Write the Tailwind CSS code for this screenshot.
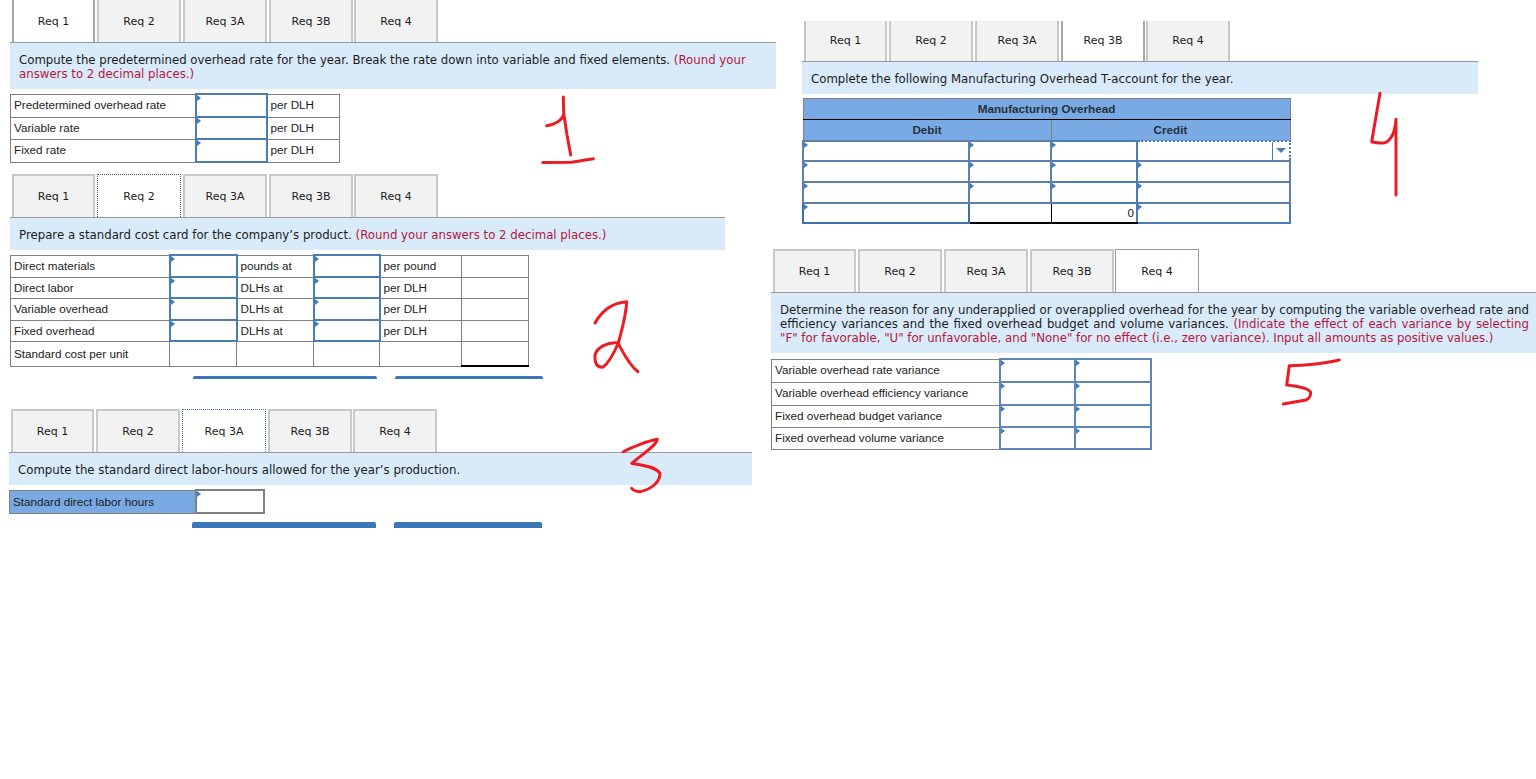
<!DOCTYPE html>
<html lang="en">
<head>
    <meta charset="UTF-8">
    <title>Req worksheets</title>
    <script src="https://cdn.jsdelivr.net/npm/@tailwindcss/browser@4"></script>
</head>
<body class="bg-white">
<div class="relative w-[1536px] h-[779px] overflow-hidden font-['DejaVu_Sans',sans-serif] text-[#1c1c1c]">

    <!-- Req 1 -->
    <section class="absolute left-[10px] top-0 w-[766px]">
        <div class="flex gap-[2px] pl-[2px] h-[42px] text-[11px]">
            <div class="w-[83px] flex items-center justify-center bg-white border-x-2 border-[#a8a8a8] pt-[2px]">Req 1</div>
            <div class="w-[84px] flex items-center justify-center bg-[#f2f2f2] border-x-2 border-[#c8c8c8] pt-[2px]">Req 2</div>
            <div class="w-[84px] flex items-center justify-center bg-[#f2f2f2] border-x-2 border-[#c8c8c8] pt-[2px]">Req 3A</div>
            <div class="w-[84px] flex items-center justify-center bg-[#f2f2f2] border-x-2 border-[#c8c8c8] pt-[2px]">Req 3B</div>
            <div class="w-[84px] flex items-center justify-center bg-[#f2f2f2] border-x-2 border-[#c8c8c8] pt-[2px] -ml-[1px]">Req 4</div>
        </div>
        <div class="border-t border-[#999] bg-[#d9ebfa] h-[47px] px-[9px] pt-[10px] text-[11.75px] leading-[14px]">
            Compute the predetermined overhead rate for the year. Break the rate down into variable and fixed elements. <span class="text-[#b5173a]">(Round your answers to 2 decimal places.)</span>
        </div>
        <table class="mt-[4px] w-[330px] table-fixed border-collapse font-['Liberation_Sans',sans-serif] text-[11.7px]">
            <colgroup><col class="w-[185px]"><col class="w-[71px]"><col class="w-[73px]"></colgroup>
            <tr class="h-[23px]">
                <td class="border border-[#808080] pl-[3px] pb-[1px]">Predetermined overhead rate</td>
                <td class="relative border-2 border-[#4a7db8]"><i class="absolute top-0 left-0 border-y-[3px] border-l-[4px] border-y-transparent border-l-[#3f7cc4]"></i></td>
                <td class="border border-[#808080] pl-[3px] pb-[1px]">per DLH</td>
            </tr>
            <tr class="h-[22px]">
                <td class="border border-[#808080] pl-[3px]">Variable rate</td>
                <td class="relative border-2 border-[#4a7db8]"><i class="absolute top-0 left-0 border-y-[3px] border-l-[4px] border-y-transparent border-l-[#3f7cc4]"></i></td>
                <td class="border border-[#808080] pl-[3px]">per DLH</td>
            </tr>
            <tr class="h-[23px]">
                <td class="border border-[#808080] pl-[3px] pb-[1px]">Fixed rate</td>
                <td class="relative border-2 border-[#4a7db8]"><i class="absolute top-0 left-0 border-y-[3px] border-l-[4px] border-y-transparent border-l-[#3f7cc4]"></i></td>
                <td class="border border-[#808080] pl-[3px] pb-[1px]">per DLH</td>
            </tr>
        </table>
    </section>

    <!-- Req 2 -->
    <section class="absolute left-[10px] top-[174px] w-[715px]">
        <div class="flex gap-[2px] pl-[2px] h-[43px] text-[11px]">
            <div class="w-[83px] flex items-center justify-center bg-[#f2f2f2] border-2 border-b-0 border-[#c8c8c8] pt-[2px]">Req 1</div>
            <div class="w-[84px] flex items-center justify-center bg-white border border-b-0 border-dotted border-[#4a5a70] pt-[2px]">Req 2</div>
            <div class="w-[84px] flex items-center justify-center bg-[#f2f2f2] border-2 border-b-0 border-[#c8c8c8] pt-[2px]">Req 3A</div>
            <div class="w-[84px] flex items-center justify-center bg-[#f2f2f2] border-2 border-b-0 border-[#c8c8c8] pt-[2px]">Req 3B</div>
            <div class="w-[84px] flex items-center justify-center bg-[#f2f2f2] border-2 border-b-0 border-[#c8c8c8] pt-[2px] -ml-[1px]">Req 4</div>
        </div>
        <div class="border-t border-[#999] bg-[#d9ebfa] h-[33px] px-[9px] pt-[10px] text-[11.75px] leading-[14px]">
            Prepare a standard cost card for the company’s product. <span class="text-[#b5173a]">(Round your answers to 2 decimal places.)</span>
        </div>
        <table class="mt-[4px] w-[518px] table-fixed border-collapse font-['Liberation_Sans',sans-serif] text-[11.7px]">
            <colgroup><col class="w-[159px]"><col class="w-[67px]"><col class="w-[77px]"><col class="w-[66px]"><col class="w-[82px]"><col class="w-[67px]"></colgroup>
            <tr class="h-[22px]">
                <td class="border border-[#808080] pl-[3px]">Direct materials</td>
                <td class="relative border-2 border-[#4a7db8]"><i class="absolute top-0 left-0 border-y-[3px] border-l-[4px] border-y-transparent border-l-[#3f7cc4]"></i></td>
                <td class="border border-[#808080] pl-[3px]">pounds at</td>
                <td class="relative border-2 border-[#4a7db8]"><i class="absolute top-0 left-0 border-y-[3px] border-l-[4px] border-y-transparent border-l-[#3f7cc4]"></i></td>
                <td class="border border-[#808080] pl-[3px]">per pound</td>
                <td class="border border-[#808080]"></td>
            </tr>
            <tr class="h-[21px]">
                <td class="border border-[#808080] pl-[3px]">Direct labor</td>
                <td class="relative border-2 border-[#4a7db8]"><i class="absolute top-0 left-0 border-y-[3px] border-l-[4px] border-y-transparent border-l-[#3f7cc4]"></i></td>
                <td class="border border-[#808080] pl-[3px]">DLHs at</td>
                <td class="relative border-2 border-[#4a7db8]"><i class="absolute top-0 left-0 border-y-[3px] border-l-[4px] border-y-transparent border-l-[#3f7cc4]"></i></td>
                <td class="border border-[#808080] pl-[3px]">per DLH</td>
                <td class="border border-[#808080]"></td>
            </tr>
            <tr class="h-[22px]">
                <td class="border border-[#808080] pl-[3px]">Variable overhead</td>
                <td class="relative border-2 border-[#4a7db8]"><i class="absolute top-0 left-0 border-y-[3px] border-l-[4px] border-y-transparent border-l-[#3f7cc4]"></i></td>
                <td class="border border-[#808080] pl-[3px]">DLHs at</td>
                <td class="relative border-2 border-[#4a7db8]"><i class="absolute top-0 left-0 border-y-[3px] border-l-[4px] border-y-transparent border-l-[#3f7cc4]"></i></td>
                <td class="border border-[#808080] pl-[3px]">per DLH</td>
                <td class="border border-[#808080]"></td>
            </tr>
            <tr class="h-[21px]">
                <td class="border border-[#808080] pl-[3px]">Fixed overhead</td>
                <td class="relative border-2 border-[#4a7db8]"><i class="absolute top-0 left-0 border-y-[3px] border-l-[4px] border-y-transparent border-l-[#3f7cc4]"></i></td>
                <td class="border border-[#808080] pl-[3px]">DLHs at</td>
                <td class="relative border-2 border-[#4a7db8]"><i class="absolute top-0 left-0 border-y-[3px] border-l-[4px] border-y-transparent border-l-[#3f7cc4]"></i></td>
                <td class="border border-[#808080] pl-[3px]">per DLH</td>
                <td class="border border-[#808080]"></td>
            </tr>
            <tr class="h-[25px]">
                <td class="border border-[#808080] pl-[3px]">Standard cost per unit</td>
                <td class="border border-[#808080]"></td>
                <td class="border border-[#808080]"></td>
                <td class="border border-[#808080]"></td>
                <td class="border border-[#808080]"></td>
                <td class="border border-[#808080] border-t-black border-b-2 border-b-black"></td>
            </tr>
        </table>
        <div class="flex gap-[18px] pl-[183px] mt-[9px]">
            <div class="w-[184px] h-[3px] bg-[#3b76b8] rounded-t-[2px]"></div>
            <div class="w-[148px] h-[3px] bg-[#3b76b8] rounded-t-[2px]"></div>
        </div>
    </section>

    <!-- Req 3A -->
    <section class="absolute left-[9px] top-[409px] w-[743px]">
        <div class="flex gap-[2px] pl-[2px] h-[43px] text-[11px]">
            <div class="w-[83px] flex items-center justify-center bg-[#f2f2f2] border-2 border-b-0 border-[#c8c8c8] pt-[2px]">Req 1</div>
            <div class="w-[84px] flex items-center justify-center bg-[#f2f2f2] border-2 border-b-0 border-[#c8c8c8] pt-[2px]">Req 2</div>
            <div class="w-[84px] flex items-center justify-center bg-white border border-b-0 border-dotted border-[#3f78b8] pt-[2px]">Req 3A</div>
            <div class="w-[84px] flex items-center justify-center bg-[#f2f2f2] border-2 border-b-0 border-[#c8c8c8] pt-[2px]">Req 3B</div>
            <div class="w-[84px] flex items-center justify-center bg-[#f2f2f2] border-2 border-b-0 border-[#c8c8c8] pt-[2px] -ml-[1px]">Req 4</div>
        </div>
        <div class="border-t border-[#999] bg-[#d9ebfa] h-[33px] px-[9px] pt-[10px] text-[11.75px] leading-[14px]">
            Compute the standard direct labor-hours allowed for the year’s production.
        </div>
        <table class="mt-[4px] w-[254px] table-fixed border-collapse font-['Liberation_Sans',sans-serif] text-[11.7px]">
            <colgroup><col class="w-[186px]"><col class="w-[68px]"></colgroup>
            <tr class="h-[23px]">
                <td class="border border-[#808080] bg-[#7aaae4] pl-[3px]">Standard direct labor hours</td>
                <td class="relative border-2 border-[#808080]"><i class="absolute top-0 left-0 border-y-[3px] border-l-[4px] border-y-transparent border-l-[#3f7cc4]"></i></td>
            </tr>
        </table>
        <div class="flex gap-[18px] pl-[183px] mt-[8px]">
            <div class="w-[184px] h-[6px] bg-[#3b76b8] rounded-t-[2px]"></div>
            <div class="w-[148px] h-[6px] bg-[#3b76b8] rounded-t-[2px]"></div>
        </div>
    </section>

    <!-- Req 3B -->
    <section class="absolute left-[802px] top-[21px] w-[676px]">
        <div class="flex gap-[2px] pl-[2px] h-[40px] text-[11px]">
            <div class="w-[83px] flex items-center justify-center bg-[#f2f2f2] border-x-2 border-[#c8c8c8]">Req 1</div>
            <div class="w-[84px] flex items-center justify-center bg-[#f2f2f2] border-x-2 border-[#c8c8c8]">Req 2</div>
            <div class="w-[84px] flex items-center justify-center bg-[#f2f2f2] border-x-2 border-[#c8c8c8]">Req 3A</div>
            <div class="w-[84px] flex items-center justify-center bg-white border-x-2 border-[#a8a8a8]">Req 3B</div>
            <div class="w-[84px] flex items-center justify-center bg-[#f2f2f2] border-x-2 border-[#c8c8c8] -ml-[1px]">Req 4</div>
        </div>
        <div class="border-t border-[#999] bg-[#d9ebfa] h-[33px] px-[9px] pt-[10px] text-[11.75px] leading-[14px]">
            Complete the following Manufacturing Overhead T-account for the year.
        </div>
        <table class="mt-[4px] w-[487px] table-fixed border-collapse font-['Liberation_Sans',sans-serif] text-[11.7px]">
            <colgroup><col class="w-[166px]"><col class="w-[82px]"><col class="w-[86px]"><col class="w-[153px]"></colgroup>
            <tr class="h-[21px]">
                <th colspan="4" class="border border-[#808080] border-b-black bg-[#7aaae4] font-bold text-[#26303c]">Manufacturing Overhead</th>
            </tr>
            <tr class="h-[21px]">
                <th colspan="2" class="border border-[#808080] bg-[#7aaae4] font-bold text-[#26303c]">Debit</th>
                <th colspan="2" class="border border-[#808080] bg-[#7aaae4] font-bold text-[#26303c]">Credit</th>
            </tr>
            <tr class="h-[20px]">
                <td class="relative border-2 border-[#5f7fa8]"><i class="absolute top-0 left-0 border-y-[3px] border-l-[4px] border-y-transparent border-l-[#3f7cc4]"></i></td>
                <td class="relative border-2 border-[#5f7fa8]"><i class="absolute top-0 left-0 border-y-[3px] border-l-[4px] border-y-transparent border-l-[#3f7cc4]"></i></td>
                <td class="relative border-2 border-[#4a7db8] border-l-[#1f4f86]"><i class="absolute top-0 left-0 border-y-[3px] border-l-[4px] border-y-transparent border-l-[#3f7cc4]"></i></td>
                <td class="relative border-2 border-dotted border-[#4a7db8]">
                    <div class="absolute right-0 top-0 bottom-0 w-[17px] border-l border-[#4a7db8] flex items-center justify-center">
                        <i class="border-x-[5px] border-t-[5px] border-x-transparent border-t-[#4a7db8]"></i>
                    </div>
                </td>
            </tr>
            <tr class="h-[21px]">
                <td class="relative border-2 border-[#5f7fa8]"><i class="absolute top-0 left-0 border-y-[3px] border-l-[4px] border-y-transparent border-l-[#3f7cc4]"></i></td>
                <td class="relative border-2 border-[#5f7fa8]"><i class="absolute top-0 left-0 border-y-[3px] border-l-[4px] border-y-transparent border-l-[#3f7cc4]"></i></td>
                <td class="relative border-2 border-[#4a7db8] border-l-[#1f4f86]"><i class="absolute top-0 left-0 border-y-[3px] border-l-[4px] border-y-transparent border-l-[#3f7cc4]"></i></td>
                <td class="relative border-2 border-[#5f7fa8]"><i class="absolute top-0 left-0 border-y-[3px] border-l-[4px] border-y-transparent border-l-[#3f7cc4]"></i></td>
            </tr>
            <tr class="h-[21px]">
                <td class="relative border-2 border-[#5f7fa8]"><i class="absolute top-0 left-0 border-y-[3px] border-l-[4px] border-y-transparent border-l-[#3f7cc4]"></i></td>
                <td class="relative border-2 border-[#5f7fa8]"><i class="absolute top-0 left-0 border-y-[3px] border-l-[4px] border-y-transparent border-l-[#3f7cc4]"></i></td>
                <td class="relative border-2 border-[#4a7db8] border-l-[#1f4f86]"><i class="absolute top-0 left-0 border-y-[3px] border-l-[4px] border-y-transparent border-l-[#3f7cc4]"></i></td>
                <td class="relative border-2 border-[#5f7fa8]"><i class="absolute top-0 left-0 border-y-[3px] border-l-[4px] border-y-transparent border-l-[#3f7cc4]"></i></td>
            </tr>
            <tr class="h-[20px]">
                <td class="relative border-2 border-[#3f72ad] border-t-[#17375e]"><i class="absolute top-0 left-0 border-y-[3px] border-l-[4px] border-y-transparent border-l-[#3f7cc4]"></i></td>
                <td class="border border-black border-b-2"></td>
                <td class="border border-black border-b-2 text-right pr-[2px]">0</td>
                <td class="relative border-2 border-[#4a7db8]"><i class="absolute top-0 left-0 border-y-[3px] border-l-[4px] border-y-transparent border-l-[#3f7cc4]"></i></td>
            </tr>
        </table>
    </section>

    <!-- Req 4 -->
    <section class="absolute left-[771px] top-[249px] w-[765px]">
        <div class="flex gap-[2px] pl-[2px] h-[43px] text-[11px]">
            <div class="w-[83px] flex items-center justify-center bg-[#f2f2f2] border-2 border-b-0 border-[#c8c8c8] pt-[2px]">Req 1</div>
            <div class="w-[84px] flex items-center justify-center bg-[#f2f2f2] border-2 border-b-0 border-[#c8c8c8] pt-[2px]">Req 2</div>
            <div class="w-[84px] flex items-center justify-center bg-[#f2f2f2] border-2 border-b-0 border-[#c8c8c8] pt-[2px]">Req 3A</div>
            <div class="w-[84px] flex items-center justify-center bg-[#f2f2f2] border-2 border-b-0 border-[#c8c8c8] pt-[2px]">Req 3B</div>
            <div class="w-[84px] flex items-center justify-center bg-white border border-b-0 border-[#999] pt-[2px] -ml-[1px]">Req 4</div>
        </div>
        <div class="border-t border-[#999] bg-[#d9ebfa] h-[61px] pl-[9px] pr-[7px] pt-[10px] text-[11.75px] leading-[14px] text-justify">
            Determine the reason for any underapplied or overapplied overhead for the year by computing the variable overhead rate and efficiency variances and the fixed overhead budget and volume variances. <span class="text-[#b5173a]">(Indicate the effect of each variance by selecting "F" for favorable, "U" for unfavorable, and "None" for no effect (i.e., zero variance). Input all amounts as positive values.)</span>
        </div>
        <table class="mt-[5px] w-[379px] table-fixed border-collapse font-['Liberation_Sans',sans-serif] text-[11.7px]">
            <colgroup><col class="w-[228px]"><col class="w-[75px]"><col class="w-[76px]"></colgroup>
            <tr class="h-[23px]">
                <td class="border border-[#808080] pl-[3px] pb-[1px]">Variable overhead rate variance</td>
                <td class="relative border-2 border-[#5f86b8]"><i class="absolute top-0 left-0 border-y-[3px] border-l-[4px] border-y-transparent border-l-[#3f7cc4]"></i></td>
                <td class="relative border-2 border-[#5f86b8]"><i class="absolute top-0 left-0 border-y-[3px] border-l-[4px] border-y-transparent border-l-[#3f7cc4]"></i></td>
            </tr>
            <tr class="h-[23px]">
                <td class="border border-[#808080] pl-[3px] pb-[1px]">Variable overhead efficiency variance</td>
                <td class="relative border-2 border-[#5f86b8]"><i class="absolute top-0 left-0 border-y-[3px] border-l-[4px] border-y-transparent border-l-[#3f7cc4]"></i></td>
                <td class="relative border-2 border-[#5f86b8]"><i class="absolute top-0 left-0 border-y-[3px] border-l-[4px] border-y-transparent border-l-[#3f7cc4]"></i></td>
            </tr>
            <tr class="h-[22px]">
                <td class="border border-[#808080] pl-[3px]">Fixed overhead budget variance</td>
                <td class="relative border-2 border-[#5f86b8]"><i class="absolute top-0 left-0 border-y-[3px] border-l-[4px] border-y-transparent border-l-[#3f7cc4]"></i></td>
                <td class="relative border-2 border-[#5f86b8]"><i class="absolute top-0 left-0 border-y-[3px] border-l-[4px] border-y-transparent border-l-[#3f7cc4]"></i></td>
            </tr>
            <tr class="h-[22px]">
                <td class="border border-[#808080] pl-[3px]">Fixed overhead volume variance</td>
                <td class="relative border-2 border-[#5f86b8]"><i class="absolute top-0 left-0 border-y-[3px] border-l-[4px] border-y-transparent border-l-[#3f7cc4]"></i></td>
                <td class="relative border-2 border-[#5f86b8]"><i class="absolute top-0 left-0 border-y-[3px] border-l-[4px] border-y-transparent border-l-[#3f7cc4]"></i></td>
            </tr>
        </table>
    </section>

    <!-- handwritten numbers -->
    <svg class="absolute inset-0 pointer-events-none" width="1536" height="779" viewBox="0 0 1536 779" fill="none" stroke="#ed1c24" stroke-width="3" stroke-linecap="round" stroke-linejoin="round">
        <path d="M563.3 97 L563.7 113 L567 135 L570.7 155"/>
        <path d="M546.7 125.7 C554 124.5 561 122 563.5 115"/>
        <path d="M542.7 162.4 L571.7 162.3 L593.3 158.7"/>
        <path d="M595 323 C600 314 610 303 626.7 301.7 C626 315 622 330 618.3 343 C614 353 609 363 603 367 C597 368 594.5 363 595 355 C597 347 608 342 618 343 C622 350 628 364 638 371.7"/>
        <path d="M623.3 451.7 C632 447 648 441 657.3 439.3 C657 445 640 456 631.7 463.3 C640 465 655 466 660 473.3 C660 482 652 489 640 491.7 C636 491.5 633 490 631.7 488.3"/>
        <path d="M1380 93.3 L1371.7 141.7 C1376 143 1382 143 1385 142.7 C1391 140 1395 134 1396 119.3 L1396 195"/>
        <path d="M1339.3 360 C1328 363 1305 365.5 1289.3 365.7 L1286.7 385 C1296 386 1308 388 1310.5 392 C1311 396 1310 398 1306 400 L1283.3 404"/>
    </svg>
</div>
</body>
</html>
